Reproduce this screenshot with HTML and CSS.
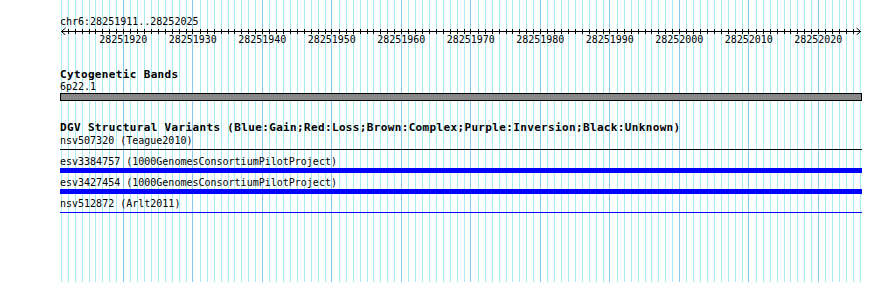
FILE: index.html
```html
<!DOCTYPE html>
<html lang="en">
<head>
    <meta charset="UTF-8">
    <meta name="viewport" content="width=device-width, initial-scale=1.0">
    <title>chr6:28251911..28252025</title>
    <link rel="stylesheet" href="styles.css">
</head>
<body>

    <div class="browser">
        <!-- grid: satu garis per basa, 20 basa = 139px -->
        <svg class="grid" width="802" height="282">
            <defs>
                <pattern id="bases" width="139" height="10" patternUnits="userSpaceOnUse">
                    <g fill="#a6ebf1">
                        <rect x="1" width="1" height="10"/>
                        <rect x="8" width="1" height="10"/>
                        <rect x="15" width="1" height="10"/>
                        <rect x="22" width="1" height="10"/>
                        <rect x="29" width="1" height="10"/>
                        <rect x="35" width="1" height="10"/>
                        <rect x="42" width="1" height="10"/>
                        <rect x="49" width="1" height="10"/>
                        <rect x="56" width="1" height="10"/>
                        <rect x="70" width="1" height="10"/>
                        <rect x="77" width="1" height="10"/>
                        <rect x="84" width="1" height="10"/>
                        <rect x="91" width="1" height="10"/>
                        <rect x="98" width="1" height="10"/>
                        <rect x="105" width="1" height="10"/>
                        <rect x="112" width="1" height="10"/>
                        <rect x="119" width="1" height="10"/>
                        <rect x="126" width="1" height="10"/>
                    </g>
                    <g fill="#88c9ee">
                        <rect x="63" width="1" height="10"/>
                        <rect x="132" width="1" height="10"/>
                    </g>
                </pattern>
            </defs>
            <rect width="802" height="282" fill="url(#bases)"/>
        </svg>

        <!-- ruler -->
        <div class="ruler">
            <div class="ruler-title">chr6:28251911..28252025</div>
            <svg class="axis" width="802" height="8">
                <defs>
                    <pattern id="ticks" width="139" height="8" patternUnits="userSpaceOnUse">
                        <g fill="#000">
                            <rect x="1" y="2" width="1" height="5"/>
                            <rect x="8" y="2" width="1" height="5"/>
                            <rect x="15" y="2" width="1" height="5"/>
                            <rect x="22" y="2" width="1" height="5"/>
                            <rect x="29" y="2" width="1" height="5"/>
                            <rect x="35" y="2" width="1" height="5"/>
                            <rect x="42" y="2" width="1" height="5"/>
                            <rect x="49" y="2" width="1" height="5"/>
                            <rect x="56" y="2" width="1" height="5"/>
                            <rect x="63" y="2" width="1" height="5"/>
                            <rect x="70" y="2" width="1" height="5"/>
                            <rect x="77" y="2" width="1" height="5"/>
                            <rect x="84" y="2" width="1" height="5"/>
                            <rect x="91" y="2" width="1" height="5"/>
                            <rect x="98" y="2" width="1" height="5"/>
                            <rect x="105" y="2" width="1" height="5"/>
                            <rect x="112" y="2" width="1" height="5"/>
                            <rect x="119" y="2" width="1" height="5"/>
                            <rect x="126" y="2" width="1" height="5"/>
                            <rect x="132" y="2" width="1" height="5"/>
                        </g>
                    </pattern>
                </defs>
                <rect x="6" width="792" height="8" fill="url(#ticks)"/>
                <rect x="1" y="4" width="800" height="1" fill="#000"/>
                <path d="M5.5 1 L1.5 4.5 L5.5 8" stroke="#000" fill="none"/>
                <path d="M796.5 1 L800.5 4.5 L796.5 8" stroke="#000" fill="none"/>
            </svg>
            <div class="ruler-labels">
                <span>28251920</span>
                <span>28251930</span>
                <span>28251940</span>
                <span>28251950</span>
                <span>28251960</span>
                <span>28251970</span>
                <span>28251980</span>
                <span>28251990</span>
                <span>28252000</span>
                <span>28252010</span>
                <span>28252020</span>
            </div>
        </div>

        <!-- cytogenetic bands -->
        <div class="track track-cyto">
            <div class="track-title">Cytogenetic Bands</div>
            <div class="label">6p22.1</div>
            <div class="band"></div>
        </div>

        <!-- structural variants -->
        <div class="track track-dgv">
            <div class="track-title">DGV Structural Variants (Blue:Gain;Red:Loss;Brown:Complex;Purple:Inversion;Black:Unknown)</div>

            <div class="feature">
                <div class="label">nsv507320 (Teague2010)</div>
                <div class="glyph"><div class="thin black"></div></div>
            </div>
            <div class="feature">
                <div class="label">esv3384757 (1000GenomesConsortiumPilotProject)</div>
                <div class="glyph"><div class="thick blue"></div></div>
            </div>
            <div class="feature">
                <div class="label">esv3427454 (1000GenomesConsortiumPilotProject)</div>
                <div class="glyph"><div class="thick blue"></div></div>
            </div>
            <div class="feature">
                <div class="label">nsv512872 (Arlt2011)</div>
                <div class="glyph"><div class="thin blue"></div></div>
            </div>
        </div>
    </div>

</body>
</html>
```

FILE: styles.css
```css
/* halaman dasar */
body {
    margin: 0;
    background: #fff;
    color: #000;
    font-family: "DejaVu Sans Mono", "Liberation Mono", monospace;
    font-size: 10px;
}

.browser {
    position: relative;
    width: 802px;
    height: 282px;
    padding-left: 60px;
    overflow: hidden;
}

/* lapisan grid di belakang track */
.grid {
    position: absolute;
    top: 0;
    left: 60px;
}

.ruler,
.track {
    position: relative;
}

/* ruler */
.ruler {
    padding-top: 16px;
}

.ruler-title {
    height: 11px;
    line-height: 11px;
}

.axis {
    display: block;
}

.ruler-labels {
    display: flex;
    height: 10px;
    line-height: 10px;
    padding-left: 28.55px;
}

.ruler-labels span {
    flex: none;
    width: 69.5px;
    text-align: center;
}

/* track */
.track-title {
    font-size: 11px;
    font-weight: bold;
    line-height: 12px;
    letter-spacing: 0.35px;
}

.label {
    line-height: 12px;
    white-space: nowrap;
}

.track-cyto {
    margin-top: 24px;
}

.band {
    height: 6px;
    border: 1px solid #000;
    background: #888;
}

.track-dgv {
    margin-top: 21px;
}

.feature .label {
    height: 11px;
    padding-top: 1px;
}

.feature {
    margin-bottom: 2px;
}

.glyph {
    height: 7px;
    display: flex;
    flex-direction: column;
    justify-content: center;
}

.thin {
    height: 1px;
}

.thick {
    height: 5px;
}

.black {
    background: #000;
}

.blue {
    background: #00f;
}
```
